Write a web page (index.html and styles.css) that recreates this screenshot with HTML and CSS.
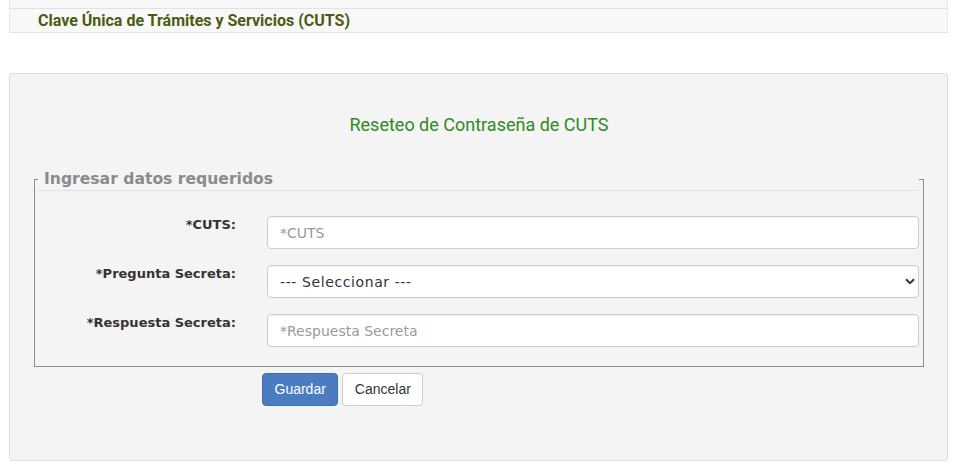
FILE: index.html
```html
<!DOCTYPE html>
<html lang="es">
<head>
<meta charset="utf-8">
<title>Reseteo de Contraseña de CUTS</title>
<link rel="stylesheet" href="styles.css">
</head>
<body>
<div class="page">
  <div class="topbar"></div>
  <div class="header">Clave Única de Trámites y Servicios (CUTS)</div>

  <div class="panel">
    <h2 class="title">Reseteo de Contraseña de CUTS</h2>
    <form class="form">
      <fieldset class="fieldset">
        <legend class="legend">Ingresar datos requeridos</legend>
        <div class="rows">
          <div class="row">
            <label class="label" for="cuts">*CUTS:</label>
            <input class="control" id="cuts" type="text" placeholder="*CUTS">
          </div>
          <div class="row">
            <label class="label" for="preg">*Pregunta Secreta:</label>
            <div class="select-wrap">
              <select class="control select" id="preg">
                <option>--- Seleccionar ---</option>
              </select>
              <svg class="chevron" width="10" height="7" viewBox="0 0 10 7"><path d="M1 1.2 L5 5.2 L9 1.2" fill="none" stroke="#333" stroke-width="2"/></svg>
            </div>
          </div>
          <div class="row">
            <label class="label" for="resp">*Respuesta Secreta:</label>
            <input class="control" id="resp" type="text" placeholder="*Respuesta Secreta">
          </div>
        </div>
      </fieldset>
      <div class="actions">
        <button type="button" class="btn btn-primary">Guardar</button>
        <button type="button" class="btn btn-default">Cancelar</button>
      </div>
    </form>
  </div>
</div>
</body>
</html>
```

FILE: styles.css
```css
* { box-sizing: border-box; }

html, body {
  margin: 0;
  padding: 0;
  background: #ffffff;
}

.page {
  margin: 0 7px 0 9px;
}

.topbar {
  height: 9px;
  background: #f7f7f7;
  border-left: 1px solid #e8e8e8;
  border-right: 1px solid #e8e8e8;
  border-bottom: 1px solid #e2e2e2;
}

.header {
  height: 24px;
  background: #f8f8f8;
  border-left: 1px solid #e8e8e8;
  border-right: 1px solid #e8e8e8;
  border-bottom: 1px solid #e4e4e4;
  padding-left: 28px;
  font-family: Roboto, "Liberation Sans", sans-serif;
  font-weight: 700;
  font-size: 16px;
  line-height: 23px;
  color: #4b5c12;
}

.panel {
  margin-top: 40px;
  height: 388px;
  background: #f4f4f4;
  border: 1px solid #dedede;
  border-radius: 3px;
  padding: 41px 23px 0 24px;
}

.title {
  margin: 0 0 33px;
  text-align: center;
  font-family: Roboto, "Liberation Sans", sans-serif;
  font-weight: 400;
  font-size: 18px;
  line-height: 20px;
  color: #2e8a1c;
}

.form {
  margin: 0;
}

.fieldset {
  margin: 0;
  padding: 0 4px 19px 3px;
  border: 1px solid #8c8c8c;
  min-width: 0;
}

.legend {
  width: 100%;
  padding: 0 6px;
  margin: 0;
  border-bottom: 1px solid #e2e2e2;
  font-family: "DejaVu Sans", Verdana, sans-serif;
  font-weight: 700;
  font-size: 15.6px;
  line-height: 22px;
  color: #8b8b8b;
}

.rows {
  display: flex;
  flex-direction: column;
  gap: 16px;
  padding-top: 25px;
}

.row {
  display: grid;
  grid-template-columns: 198px 1fr;
  column-gap: 31px;
  align-items: start;
}

.label {
  text-align: right;
  font-family: "DejaVu Sans", Verdana, sans-serif;
  font-weight: 700;
  font-size: 13px;
  line-height: 18px;
  color: #333333;
  padding-top: 0;
}

.control {
  display: block;
  width: 100%;
  height: 33px;
  margin: 0;
  padding: 0 12px;
  background: #ffffff;
  border: 1px solid #cccccc;
  border-radius: 4px;
  font-family: "DejaVu Sans", Verdana, sans-serif;
  font-size: 14px;
  color: #444444;
  box-shadow: inset 0 1px 1px rgba(0,0,0,0.05);
}

.control::placeholder {
  color: #9a9a9a;
}

.select-wrap {
  position: relative;
}

.select {
  -webkit-appearance: none;
  appearance: none;
  padding-left: 12px;
  font-size: 14px;
  letter-spacing: 0.6px;
  color: #333333;
}

.chevron {
  position: absolute;
  right: 4px;
  top: 13px;
  pointer-events: none;
}

.actions {
  display: flex;
  gap: 4px;
  padding-left: 228px;
  margin-top: 6px;
}

.btn {
  height: 33px;
  padding: 0 11.5px;
  border-radius: 4px;
  font-family: "Liberation Sans", Arial, sans-serif;
  font-size: 14px;
  line-height: 31px;
  cursor: pointer;
}

.btn-primary {
  background: #4a7cbf;
  border: 1px solid #3f6faf;
  color: #ffffff;
}

.btn-default {
  background: #ffffff;
  border: 1px solid #cccccc;
  color: #333333;
}
```
